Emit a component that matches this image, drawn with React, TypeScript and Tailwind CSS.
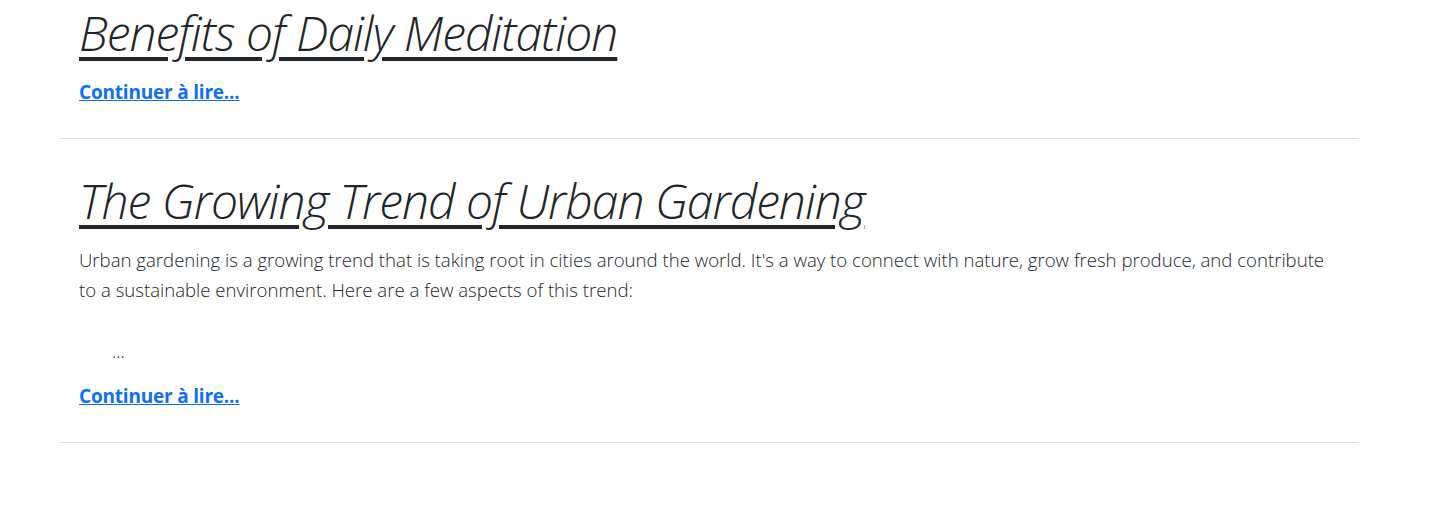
const posts = [
  {
    title: "Benefits of Daily Meditation",
    body: null as string | null,
  },
  {
    title: "The Growing Trend of Urban Gardening",
    body: "Urban gardening is a growing trend that is taking root in cities around the world. It's a way to connect with nature, grow fresh produce, and contribute to a sustainable environment. Here are a few aspects of this trend:",
  },
];

const App = () => {
  return (
    <div className="min-h-screen bg-white pl-[59px] font-['Open_Sans',sans-serif] text-[#212529]">
      <div className="w-[1300px]">
        {posts.map((post, i) => (
          <article key={i} className={i === 0 ? "pt-1" : "pt-[33px]"}>
            <div className="px-5">
              <h1 className="text-[48px] leading-[1.2] font-light italic underline decoration-[4px] underline-offset-[6px] tracking-[-1px]">
                {post.title}
              </h1>

              {post.body && (
                <>
                  <p className="mt-4 text-[18.6px] leading-[30px] font-light">
                    {post.body}
                  </p>
                  <p className="mt-[31px] pl-[33px] text-[18px] leading-[30px] font-light">
                    ...
                  </p>
                </>
              )}

              <a
                href="#"
                className={`block text-[19px] leading-[30px] font-bold tracking-[-0.2px] text-[#0d6efd] underline ${
                  post.body ? "mt-[15px]" : "mt-[15px]"
                }`}
              >
                <span>Continuer à lire...</span>
              </a>
            </div>
            <hr className="mt-[31px] border-0 border-t border-[#dfdfdf]" />
          </article>
        ))}
      </div>
    </div>
  );
};

export default App;
